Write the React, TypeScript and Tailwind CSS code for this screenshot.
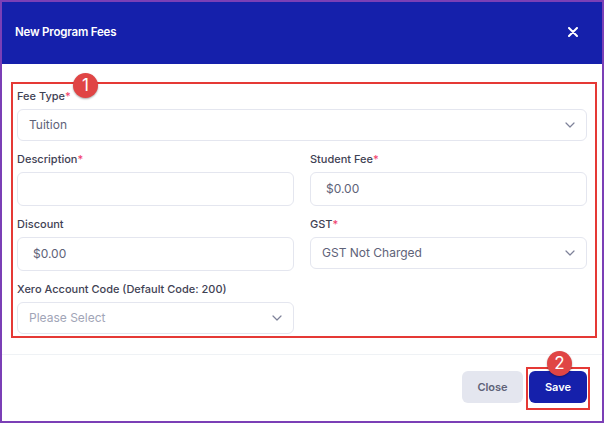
import React from "react";

const Chevron = () => (
  <svg width="10" height="6" viewBox="0 0 10 6" fill="none" className="shrink-0">
    <path d="M1 1l4 4l4-4" stroke="#7e8299" strokeWidth="1.2" strokeLinecap="round" strokeLinejoin="round" />
  </svg>
);

const Label = ({ text, req }: { text: string; req?: boolean }) => (
  <div className="h-4 mb-[5px] text-[11px] leading-4 text-[#3f4254] font-medium">
    {text}
    {req && <span className="text-[#f1416c]">*</span>}
  </div>
);

const Input = ({ value }: { value?: string }) => (
  <div className="h-[34px] rounded-md border border-[#e4e6ef] bg-white flex items-center pl-[15px] text-[12px] text-[#5e6278]">
    {value}
  </div>
);

const Select = ({ value, placeholder }: { value: string; placeholder?: boolean }) => (
  <div className="h-[32px] rounded-md border border-[#e4e6ef] bg-white flex items-center justify-between pl-[11px] pr-[11px] text-[12px]">
    <span className={placeholder ? "text-[#a1a5b7]" : "text-[#5e6278]"}>{value}</span>
    <Chevron />
  </div>
);

const Badge = ({ n, className }: { n: string; className: string }) => (
  <div
    className={
      "absolute w-[25px] h-[25px] rounded-full bg-[#e04545] text-white flex items-center justify-center text-[17px] leading-none shadow-[0_1px_2px_rgba(0,0,0,0.35)] " +
      className
    }
  >
    {n}
  </div>
);

export default function App() {
  return (
    <div
      className="relative w-[604px] h-[423px] border-2 border-[#7b3fb6] bg-white flex flex-col overflow-hidden"
      style={{ fontFamily: "Inter, 'Noto Sans', sans-serif" }}
    >
      <div className="h-[62px] shrink-0 bg-[#1520ab] flex items-center justify-between pl-[13px] pr-[24px]">
        <div className="text-white text-[11.5px] font-semibold tracking-[-0.2px]">New Program Fees</div>
        <svg width="10" height="10" viewBox="0 0 10 10" className="-mt-[3px]">
          <path d="M1 1l8 8M9 1l-8 8" stroke="white" strokeWidth="2" strokeLinecap="round" />
        </svg>
      </div>

      <div className="h-[291px] shrink-0 px-[15px] pt-[24px] border-b border-[#eff2f5] flex flex-col gap-[10px]">
        <div>
          <Label text="Fee Type" req />
          <Select value="Tuition" />
        </div>
        <div className="grid grid-cols-2 gap-x-4">
          <div>
            <Label text="Description" req />
            <Input />
          </div>
          <div>
            <Label text="Student Fee" req />
            <Input value="$0.00" />
          </div>
        </div>
        <div className="grid grid-cols-2 gap-x-4">
          <div>
            <Label text="Discount" />
            <Input value="$0.00" />
          </div>
          <div>
            <Label text="GST" req />
            <Select value="GST Not Charged" />
          </div>
        </div>
        <div className="grid grid-cols-2 gap-x-4">
          <div>
            <Label text="Xero Account Code (Default Code: 200)" />
            <Select value="Please Select" placeholder />
          </div>
        </div>
      </div>

      <div className="flex-1 flex items-start justify-end gap-[6px] pt-[16px] pr-[15px]">
        <button className="h-[32px] w-[61px] rounded-md bg-[#e4e6ef] text-[#5e6278] text-[11px] font-semibold">
          Close
        </button>
        <button className="h-[32px] w-[58px] rounded-md bg-[#1520ab] text-white text-[11px] font-semibold">
          Save
        </button>
      </div>

      {/* annotations */}
      <div className="absolute left-[9px] top-[80px] w-[586px] h-[256px] border-2 border-[#e53935] pointer-events-none" />
      <Badge n="1" className="left-[71px] top-[71px]" />
      <div className="absolute left-[524px] top-[365px] w-[64px] h-[43px] border-2 border-[#e53935] pointer-events-none" />
      <Badge n="2" className="left-[545px] top-[349px]" />
    </div>
  );
}
